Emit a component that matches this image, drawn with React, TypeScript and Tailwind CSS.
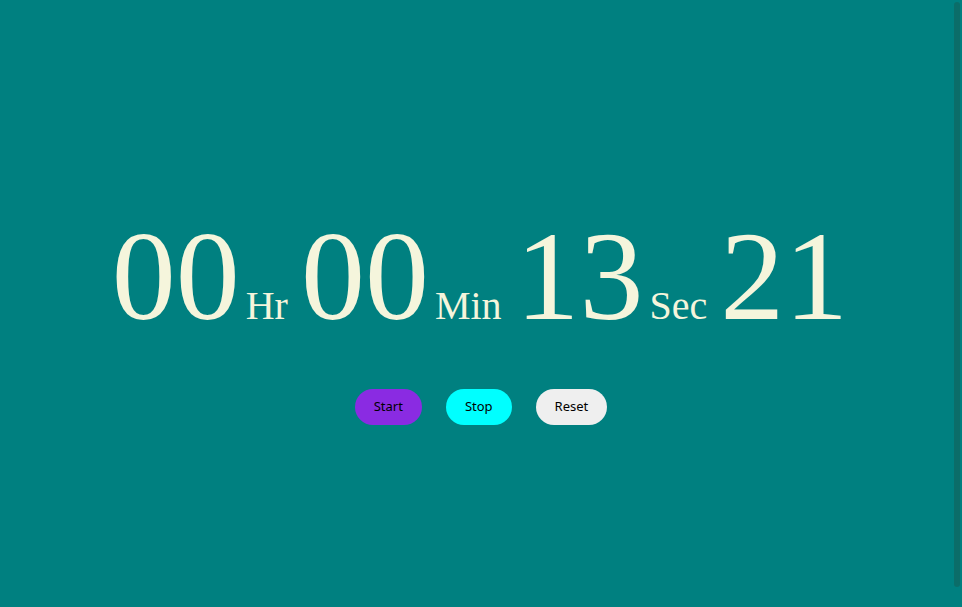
import React from 'react';

const units = [
    { value: '00', label: 'Hr', gap: 'mr-[13px]' },
    { value: '00', label: 'Min', gap: 'mr-[14px]' },
    { value: '13', label: 'Sec', gap: 'mr-[13px]' },
];

const App: React.FC = () => {
    return (
        <div className="relative h-[607px] w-full overflow-hidden bg-[#008080] flex flex-col items-center pt-[212px]">
            <div
                className="flex items-baseline text-[#f5f5dc] leading-none pr-[2px]"
                style={{ fontFamily: '"Liberation Serif", "Times New Roman", serif' }}
            >
                {units.map((u, i) => (
                    <div key={i} className={`flex items-baseline ${u.gap}`}>
                        <span className="text-[128px] leading-none">{u.value}</span>
                        <span className="text-[40px] leading-none ml-[6px]">{u.label}</span>
                    </div>
                ))}
                <span className="text-[128px] leading-none">21</span>
            </div>

            <div
                className="mt-[49px] flex gap-6 text-[13px] text-black"
                style={{ fontFamily: '"Noto Sans", "DejaVu Sans", sans-serif' }}
            >
                <button className="h-9 px-[19px] rounded-full bg-[#8a2be2]">Start</button>
                <button className="h-9 px-[19px] rounded-full bg-[#00ffff]">Stop</button>
                <button className="h-9 px-[19px] rounded-full bg-[#efefef]">Reset</button>
            </div>

            <div className="absolute right-[2px] top-[2px] w-[6px] h-[585px] rounded-full bg-[#0b6d69]" />
        </div>
    );
};

export default App;
